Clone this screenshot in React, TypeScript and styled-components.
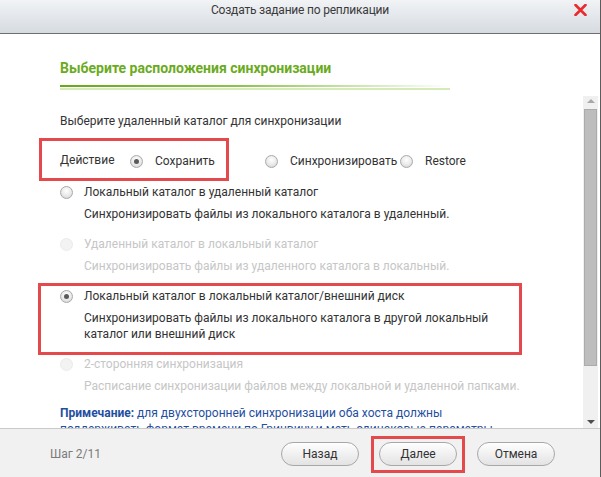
import styled, { createGlobalStyle } from "styled-components";

const GlobalStyle = createGlobalStyle`
  html, body {
    margin: 0;
    padding: 0;
    background: #ffffff;
  }
  body {
    font-family: Roboto, "Liberation Sans", sans-serif;
    font-size: 12px;
    color: #333333;
  }
`;

interface IOption {
  title: string;
  desc: string[];
  checked?: boolean;
  disabled?: boolean;
}

const options: IOption[] = [
  {
    title: "Локальный каталог в удаленный каталог",
    desc: ["Синхронизировать файлы из локального каталога в удаленный."],
  },
  {
    title: "Удаленный каталог в локальный каталог",
    desc: ["Синхронизировать файлы из удаленного каталога в локальный."],
    disabled: true,
  },
  {
    title: "Локальный каталог в локальный каталог/внешний диск",
    desc: [
      "Синхронизировать файлы из локального каталога в другой локальный",
      "каталог или внешний диск",
    ],
    checked: true,
  },
  {
    title: "2-сторонняя синхронизация",
    desc: ["Расписание синхронизации файлов между локальной и удаленной папками."],
    disabled: true,
  },
];

const Dialog = styled.div`
  position: relative;
  width: 600px;
  height: 477px;
  display: flex;
  flex-direction: column;
  background: #ffffff;
  border-right: 1px solid #5c5c5c;
  overflow: hidden;
`;
const TitleBar = styled.header`
  height: 33px;
  flex: none;
  display: grid;
  grid-template-columns: 1fr auto 1fr;
  align-items: center;
  background: linear-gradient(#f1f3f5, #d6dbe1);
  border-bottom: 1px solid #6d6f72;
`;
const Title = styled.span`
  grid-column: 2;
  font-size: 12px;
  color: #3a3a3a;
  letter-spacing: -0.2px;
  margin-top: -13px;
`;
const Close = styled.button`
  grid-column: 3;
  justify-self: end;
  margin: -14px 13px 0 0;
  padding: 0;
  border: none;
  background: none;
  width: 13px;
  height: 12px;
  display: flex;
`;
const Header = styled.div`
  height: 62px;
  flex: none;
  padding: 26px 0 0 60px;
  box-sizing: border-box;
`;
const Heading = styled.h2`
  margin: 0;
  font-size: 14px;
  line-height: 16px;
  font-weight: 700;
  color: #6aab1e;
`;
const Underline = styled.div`
  margin-top: 9px;
  width: 390px;
  height: 2px;
  background: linear-gradient(90deg, #66a917 0%, #8cc24a 45%, rgba(180, 215, 130, 0) 100%);
  border-bottom: 1px solid #fff;
  box-shadow: 0 2px 0 0 rgba(160, 208, 96, 0.45);
`;
const Body = styled.div`
  flex: 1;
  display: flex;
  min-height: 0;
  padding-right: 2px;
`;
const Scroll = styled.div`
  flex: 1;
  overflow: hidden;
  padding: 17px 0 0 60px;
  position: relative;
`;
const Intro = styled.p`
  margin: 0;
  line-height: 16px;
`;
const ActionRow = styled.div`
  margin-top: 21px;
  height: 22px;
  display: grid;
  grid-template-columns: 70px 135px 135px 135px;
  align-items: center;
`;
const ActionLabel = styled.span`
  margin-top: -3px;
`;
const Choice = styled.label`
  display: flex;
  align-items: center;
  gap: 12px;
  white-space: nowrap;
`;
const Radio = styled.span<{ $checked?: boolean; $disabled?: boolean }>`
  flex: none;
  position: relative;
  width: 11px;
  height: 11px;
  border-radius: 50%;
  border: 1px solid ${(p) => (p.$disabled ? "#ebebeb" : "#a9a9a9")};
  background: ${(p) =>
    p.$disabled
      ? "#f3f3f3"
      : "radial-gradient(circle at 50% 35%, #ffffff 0%, #e9e9e9 55%, #cfcfcf 100%)"};
  &::after {
    content: "";
    display: ${(p) => (p.$checked ? "block" : "none")};
    position: absolute;
    left: 3px;
    top: 3px;
    width: 5px;
    height: 5px;
    border-radius: 50%;
    background: #5a5a5a;
  }
`;
const OptionList = styled.div`
  margin-top: 12px;
  display: flex;
  flex-direction: column;
  gap: 14px;
`;
const Option = styled.div<{ $disabled?: boolean }>`
  display: grid;
  grid-template-columns: 24px 1fr;
  row-gap: 6px;
  line-height: 16px;
  color: ${(p) => (p.$disabled ? "#c6c6c6" : "#333333")};
`;
const OptionRadio = styled.div`
  display: flex;
  align-items: center;
`;
const Desc = styled.div`
  grid-column: 2;
`;
const Note = styled.p`
  margin: 11px 0 0 0;
  width: 450px;
  line-height: 16px;
  color: #1f4f9f;
  b {
    font-weight: 700;
  }
`;
const Scrollbar = styled.div`
  width: 15px;
  flex: none;
  background: #f0f0f0;
  display: flex;
  flex-direction: column;
  align-items: center;
`;
const Arrow = styled.span<{ $down?: boolean }>`
  width: 0;
  height: 0;
  border-left: 4px solid transparent;
  border-right: 4px solid transparent;
  ${(p) =>
    p.$down
      ? "border-top: 4px solid #4e4e4e; margin-top: auto; margin-bottom: 4px;"
      : "border-bottom: 4px solid #a8a8a8; margin-top: 3px;"}
`;
const Thumb = styled.div`
  margin-top: 6px;
  width: 11px;
  height: 255px;
  background: #bdbdbd;
  border: 1px solid #ababab;
`;
const Footer = styled.footer`
  height: 48px;
  flex: none;
  display: flex;
  align-items: center;
  padding: 0 45px 0 50px;
  background: #f1f1f1;
  border-top: 1px solid #c9c9c9;
`;
const Step = styled.span`
  color: #7b7b7b;
  margin-top: 2px;
  margin-right: auto;
`;
const Buttons = styled.div`
  display: flex;
  gap: 20px;
  margin-top: 2px;
`;
const Button = styled.button`
  width: 78px;
  height: 24px;
  border-radius: 12px;
  border: 1px solid #a8a8a8;
  background: linear-gradient(#fefefe, #e3e3e3);
  font-family: Roboto, "Liberation Sans", sans-serif;
  font-size: 12px;
  color: #333333;
  padding: 0;
`;
const Mark = styled.div`
  position: absolute;
  border: 3px solid #e4494c;
  pointer-events: none;
`;

const App = () => {
  return (
    <>
      <GlobalStyle />
      <Dialog>
        <TitleBar>
          <Title>Создать задание по репликации</Title>
          <Close aria-label="Закрыть">
            <svg width="13" height="12" viewBox="0 0 13 12">
              <path d="M1.5 1 L11.5 11 M11.5 1 L1.5 11" stroke="#ea2a2c" strokeWidth="2.6" strokeLinecap="round" />
            </svg>
          </Close>
        </TitleBar>
        <Header>
          <Heading>Выберите расположения синхронизации</Heading>
          <Underline />
        </Header>
        <Body>
          <Scroll>
            <Intro>Выберите удаленный каталог для синхронизации</Intro>
            <ActionRow>
              <ActionLabel>Действие</ActionLabel>
              <Choice>
                <Radio $checked />
                Сохранить
              </Choice>
              <Choice>
                <Radio />
                Синхронизировать
              </Choice>
              <Choice>
                <Radio />
                Restore
              </Choice>
            </ActionRow>
            <OptionList>
              {options.map((o) => (
                <Option key={o.title} $disabled={o.disabled}>
                  <OptionRadio>
                    <Radio $checked={o.checked} $disabled={o.disabled} />
                  </OptionRadio>
                  <span>{o.title}</span>
                  <Desc>
                    {o.desc.map((line) => (
                      <div key={line}>{line}</div>
                    ))}
                  </Desc>
                </Option>
              ))}
            </OptionList>
            <Note>
              <b>Примечание:</b> для двухсторонней синхронизации оба хоста должны
              поддерживать формат времени по Гринвичу и меть одинаковые параметры
              часового пояса.
            </Note>
          </Scroll>
          <Scrollbar>
            <Arrow />
            <Thumb />
            <Arrow $down />
          </Scrollbar>
        </Body>
        <Footer>
          <Step>Шаг 2/11</Step>
          <Buttons>
            <Button>Назад</Button>
            <Button>Далее</Button>
            <Button>Отмена</Button>
          </Buttons>
        </Footer>
        <Mark style={{ left: 39, top: 138, width: 184, height: 37 }} />
        <Mark style={{ left: 38, top: 283, width: 478, height: 66 }} />
        <Mark style={{ left: 371, top: 436, width: 88, height: 31 }} />
      </Dialog>
    </>
  );
};

export default App;
